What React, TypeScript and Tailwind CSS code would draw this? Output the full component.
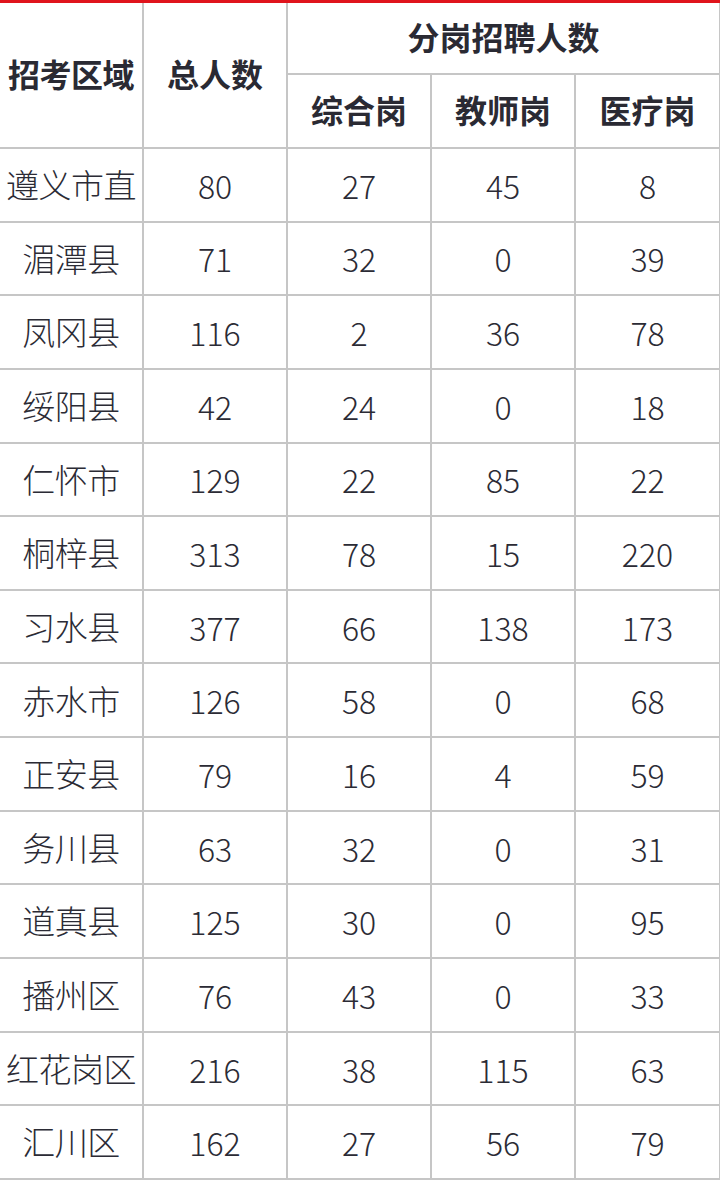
const rows: [string, number, number, number, number][] = [
  ["遵义市直", 80, 27, 45, 8],
  ["湄潭县", 71, 32, 0, 39],
  ["凤冈县", 116, 2, 36, 78],
  ["绥阳县", 42, 24, 0, 18],
  ["仁怀市", 129, 22, 85, 22],
  ["桐梓县", 313, 78, 15, 220],
  ["习水县", 377, 66, 138, 173],
  ["赤水市", 126, 58, 0, 68],
  ["正安县", 79, 16, 4, 59],
  ["务川县", 63, 32, 0, 31],
  ["道真县", 125, 30, 0, 95],
  ["播州区", 76, 43, 0, 33],
  ["红花岗区", 216, 38, 115, 63],
  ["汇川区", 162, 27, 56, 79],
];

const cell = "border-2 border-[#c6c6c6] text-center align-middle p-0";
const head = `${cell} text-[32px] font-bold pb-[5px] text-[#2a2a33]`;

export default function App() {
  return (
    <div className="w-[720px] h-[1180px] bg-white overflow-hidden font-['Noto_Sans_CJK_SC','Noto_Sans',sans-serif] text-[#2b2b35]">
      <div className="h-[3px] bg-[#e0141c]" />
      <table className="w-[720px] table-fixed border-collapse">
        <colgroup>
          <col className="w-[143px]" />
          <col className="w-[144px]" />
          <col className="w-[144px]" />
          <col className="w-[144px]" />
          <col className="w-[145px]" />
        </colgroup>
        <thead>
          <tr className="h-[71px]">
            <th rowSpan={2} className={`${head} border-t-0 border-l-0 tracking-[-0.5px] whitespace-nowrap`}>
              招考区域
            </th>
            <th rowSpan={2} className={`${head} border-t-0`}>
              总人数
            </th>
            <th colSpan={3} className={`${head} border-t-0`}>
              分岗招聘人数
            </th>
          </tr>
          <tr className="h-[74px]">
            <th className={head}>综合岗</th>
            <th className={head}>教师岗</th>
            <th className={head}>医疗岗</th>
          </tr>
        </thead>
        <tbody className="font-light">
          {rows.map((r) => (
            <tr key={r[0]} className="h-[73.65px]">
              <td className={`${cell} border-l-0 text-[33px] tracking-[-0.5px] whitespace-nowrap`}>{r[0]}</td>
              <td className={`${cell} text-[32px]`}>{r[1]}</td>
              <td className={`${cell} text-[32px]`}>{r[2]}</td>
              <td className={`${cell} text-[32px]`}>{r[3]}</td>
              <td className={`${cell} text-[32px]`}>{r[4]}</td>
            </tr>
          ))}
        </tbody>
      </table>
    </div>
  );
}
